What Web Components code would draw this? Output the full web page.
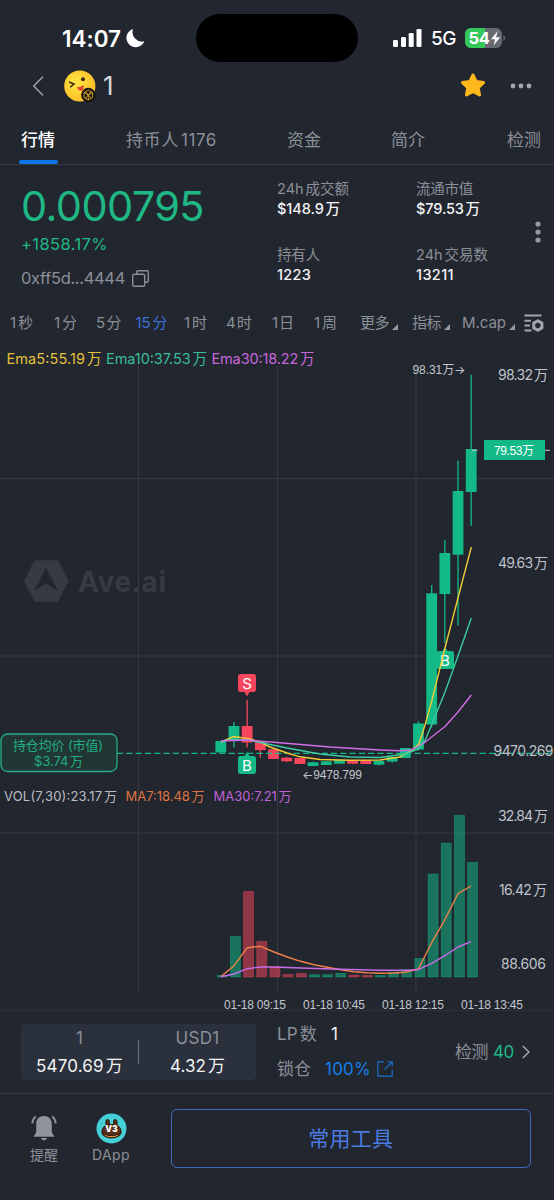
<!DOCTYPE html>
<html lang="zh-CN">
<head>
<meta charset="utf-8">
<title>Ave.ai</title>
<style>
    body {
        margin: 0;
        background: #22262f;
        color: #8b8f98;
        font-family: Inter, "Noto Sans CJK SC", sans-serif;
        text-autospace: normal;
    }
</style>
</head>
<body>
<app-screen>
    <status-bar></status-bar>
    <token-header name="1"></token-header>
    <tab-bar></tab-bar>
    <price-summary></price-summary>
    <interval-bar></interval-bar>
    <kline-chart></kline-chart>
    <pool-info></pool-info>
    <action-bar></action-bar>
</app-screen>

<script>
// Base: every element paints its template once in an open shadow root
class BaseElement extends HTMLElement {
    constructor() {
        super();
        this.attachShadow({mode: 'open'});
        this._sDOM = this.shadowRoot;
    }
    connectedCallback() {
        const tpl = document.createElement('template');
        tpl.innerHTML = `<style>:host{display:block;box-sizing:border-box} *{box-sizing:border-box}</style>` + this.render();
        this._sDOM.replaceChildren(tpl.content.cloneNode(true));
    }
}

class AppScreen extends BaseElement {
    render() {
        return `
        <style>
            :host {
                display: grid;
                width: 554px;
                height: 1200px;
                overflow: hidden;
                grid-template-rows: 64px 43px 58px 135px 45px 665px 84px 106px;
            }
        </style>
        <slot></slot>`;
    }
}

class StatusBar extends BaseElement {
    render() {
        return `
        <style>
            :host { display: grid; grid-template-columns: 196px 162px 1fr; padding-top: 14px; color: #fff; }
            .time { display: flex; align-items: center; height: 48px; padding-left: 62px; gap: 5px; font-size: 22.500px; font-weight: 600; }
            .island { height: 48px; border-radius: 24px; background: #000; }
            .right { display: flex; align-items: center; height: 48px; padding-left: 35px; font-size: 19px; font-weight: 500; }
            .right svg { display: block; }
            .net { margin: 1px 9px 0 9px; }
        </style>
        <div class="time"><fit-text w="59">14:07</fit-text>
            <svg width="19" height="20" viewBox="0 0 19 20"><path d="M7 1A9.3 9.3 0 1 0 18.4 13.3 9.6 9.6 0 0 1 7 1Z" fill="#fff"/></svg>
        </div>
        <div class="island"></div>
        <div class="right">
            <svg width="29" height="19" viewBox="0 0 29 19" fill="#fff"><rect y="11" width="5" height="7" rx="1.3"/><rect x="8" y="8" width="5" height="10" rx="1.3"/><rect x="15.7" y="4" width="5" height="14" rx="1.3"/><rect x="23.5" y="0" width="5" height="18" rx="1.3"/></svg>
            <fit-text class="net" w="25">5G</fit-text>
            <svg width="41" height="20" viewBox="0 0 41 20">
                <defs><clipPath id="b"><rect width="37" height="20" rx="6"/></clipPath></defs>
                <g clip-path="url(#b)"><rect width="37" height="20" fill="#676a72"/><rect width="20" height="20" fill="#34c759"/></g>
                <path d="M38.4 7v6c2.2-.8 2.2-5.2 0-6Z" fill="#676a72"/>
                <text x="3.5" y="16" textLength="21.5" font-size="16.5" font-weight="700" fill="#fff">54</text>
                <path d="M32.700 3 26 11.200h4.200L28.500 17.500l6.700-8.300H31Z" fill="#fff"/>
            </svg>
        </div>`;
    }
}

class TokenHeader extends BaseElement {
    render() {
        return `
        <style>
            :host { display: flex; align-items: center; padding: 0 22px 0 32px; color: #d4d6da; font-size: 26px; }
            .face { margin: 0 6px 0 19px; }
            .star { margin: 0 24px 0 auto; }
            svg { display: block; }
        </style>
        <svg width="13" height="20" viewBox="0 0 13 20" fill="none" stroke="#a0a3aa" stroke-width="1.500"><path d="M11 .8 1.700 10 11 19.200"/></svg>
        <svg class="face" width="33" height="32" viewBox="0 0 33 32">
            <defs><radialGradient id="f" cx=".4" cy=".4"><stop offset=".3" stop-color="#ffe03f"/><stop offset="1" stop-color="#fdc32b"/></radialGradient></defs>
            <circle cx="15.800" cy="16" r="15.600" fill="url(#f)"/>
            <circle cx="19" cy="9.300" r="2" fill="#3a2614"/>
            <path d="m5 12 5 2-3.800 3.300" fill="none" stroke="#3a2614" stroke-width="1.500"/>
            <path d="M12.800 17.200q3.200.5 6.700-2.100.8 5.300-2.300 5.600-3.300-.3-4.400-3.500Z" fill="#e8432c"/>
            <circle cx="24.300" cy="25" r="7.200" fill="#17140f"/>
            <path d="m24.300 20 4.300 2.500v5l-4.300 2.500-4.300-2.500v-5ZM20 22.500l4.300 2.500 4.300-2.500M24.300 25v5M21.500 21.800l5.600 6.400M27.100 21.800l-5.600 6.400" fill="none" stroke="#dba52c" stroke-width=".9"/>
        </svg>
        <span>${this.getAttribute('name')}</span>
        <svg class="star" width="26" height="25" viewBox="0 0 26 25"><path d="m13 2 3.200 6.600 7.300 1-5.300 5 1.300 7.300L13 18.500l-6.500 3.400 1.300-7.300-5.300-5 7.300-1Z" fill="#ffb81c" stroke="#ffb81c" stroke-width="3" stroke-linejoin="round"/></svg>
        <svg width="22" height="6" viewBox="0 0 22 6" fill="#a2a5ab"><circle cx="3" cy="3" r="2.400"/><circle cx="11" cy="3" r="2.400"/><circle cx="19" cy="3" r="2.400"/></svg>`;
    }
}

class TabBar extends BaseElement {
    render() {
        return `
        <style>
            :host { display: grid; grid-template-columns: 107px 161px 104px 116px 1fr; padding-left: 19px; border-bottom: 1px solid #343a45; font-size: 17px; }
            div { display: flex; flex-direction: column; height: 57px; padding-top: 22px; line-height: 22px; }
            .on { color: #fff; font-weight: 500; }
            .on fit-text { margin-left: 2px; }
            .on::after { content: ""; width: 39px; height: 4px; margin-top: 9px; border-radius: 3px; background: #0e75ea; }
        </style>
        <div class="on"><fit-text w="34">行情</fit-text></div>
        <div><fit-text w="91">持币人1176</fit-text></div>
        <div><fit-text w="34">资金</fit-text></div>
        <div><fit-text w="34">简介</fit-text></div>
        <div><fit-text w="34">检测</fit-text></div>`;
    }
}

class PriceSummary extends BaseElement {
    render() {
        const stat = (label, lw, value, vw) => `
            <div class="stat"><fit-text w="${lw}">${label}</fit-text><fit-text class="v" w="${vw}">${value}</fit-text></div>`;
        return `
        <style>
            :host { display: grid; grid-template-columns: 255px 1fr 10px; padding: 0 11px 0 22px; }
            .left { display: flex; flex-direction: column; padding-top: 16px; }
            .price { color: #1fb885; font-size: 41.500px; line-height: 50px; margin-left: -1px; }
            .chg { color: #1fb885; font-size: 16.500px; line-height: 20px; margin: 3px 0 0 -1px; }
            .addr { display: flex; align-items: center; gap: 7px; font-size: 16.500px; line-height: 20px; margin: 14px 0 0 -1px; }
            .stats { display: grid; grid-template-columns: 139px 1fr; grid-auto-rows: 66px; padding-top: 14px; font-size: 14.500px; line-height: 20px; }
            .stat { display: flex; flex-direction: column; }
            .v { color: #f2f3f5; font-weight: 450; }
            .more { margin-top: 56px; }
        </style>
        <div class="left">
            <fit-text class="price" w="183">0.000795</fit-text>
            <fit-text class="chg" w="87">+1858.17%</fit-text>
            <div class="addr"><fit-text w="104">0xff5d...4444</fit-text>
                <svg width="17" height="17" viewBox="0 0 17 17" fill="none" stroke="#8b8f98" stroke-width="1.400"><rect x=".7" y="4.200" width="12" height="12" rx="1.500"/><path d="M4.700 4V2.200q0-1.500 1.500-1.500h8.600q1.500 0 1.500 1.500v8.600q0 1.500-1.500 1.500H13"/></svg>
            </div>
        </div>
        <div class="stats">
            ${stat('24h成交额', 72, '$148.9万', 63)}
            ${stat('流通市值', 57, '$79.53万', 64)}
            ${stat('持有人', 43, '1223', 34)}
            ${stat('24h交易数', 72, '13211', 38)}
        </div>
        <svg class="more" width="10" height="22" viewBox="0 0 10 22" fill="#9699a0"><circle cx="5" cy="3" r="2.600"/><circle cx="5" cy="11" r="2.600"/><circle cx="5" cy="19" r="2.600"/></svg>`;
    }
}

class IntervalBar extends BaseElement {
    render() {
        const tri = `<svg width="6" height="6" viewBox="0 0 6 6"><path d="M6 0v6H0Z" fill="#9699a0"/></svg>`;
        return `
        <style>
            :host { display: grid; grid-template-columns: 44px 42px 39.500px 48.500px 42px 46px 42px 46px 52px 50px 62px 1fr; align-items: center; padding-left: 10px; font-size: 15px; line-height: 20px; }
            .on { color: #3b6fd8; }
            div { display: flex; align-items: flex-end; gap: 3px; }
            div svg { margin-bottom: 3px; }
        </style>
        <fit-text w="23">1秒</fit-text>
        <fit-text w="23">1分</fit-text>
        <fit-text w="25">5分</fit-text>
        <fit-text class="on" w="32">15分</fit-text>
        <fit-text w="23">1时</fit-text>
        <fit-text w="25">4时</fit-text>
        <fit-text w="21">1日</fit-text>
        <fit-text w="23">1周</fit-text>
        <div><fit-text w="29">更多</fit-text>${tri}</div>
        <div><fit-text w="29">指标</fit-text>${tri}</div>
        <div><fit-text w="44">M.cap</fit-text>${tri}</div>
        <svg width="20" height="18" viewBox="0 0 20 18" fill="none" stroke="#a2a5ab" stroke-width="1.900"><path d="M.5 1.500h17M.5 6.800h6.500M.5 11.500h5.500M.5 16.500h7"/><path d="m13.800 6.700 4.100 2.400v4.800l-4.100 2.400-4.100-2.400V9.100Z" stroke-width="3" stroke-linejoin="round"/></svg>`;
    }
}

// Price and volume panes; y values are pixels of the chart's own 554x1200 space
class KlineChart extends BaseElement {
    get candles() {
        // [up, open/close top, bottom, wick top, wick bottom, volume top]
        return [
            [1, 741, 752.5, 741, 752.5, 975], [1, 726, 741, 722, 747.5, 936], [0, 726, 742.5, 700, 747.5, 891],
            [0, 741, 750, 741, 757.7, 941], [0, 749.3, 759, 749, 759, 966.3], [0, 757.7, 761.3, 757, 762, 974],
            [0, 758, 764, 758, 764, 973], [1, 762.3, 766, 761.5, 766, 974.3], [1, 761.3, 765, 761, 765, 974.3],
            [1, 760, 763.7, 760, 764, 973], [0, 760.3, 763.7, 760, 764, 974.7], [0, 760.3, 764, 760, 764, 975],
            [1, 761, 764.7, 761, 765.5, 975], [1, 757, 761.5, 757, 762.5, 971.7], [1, 748, 758, 748, 758, 969.3],
            [1, 723.5, 749.5, 721.5, 750.5, 958], [1, 593.3, 724.5, 585, 727.5, 873.7], [1, 553, 594, 540, 643, 842.7],
            [1, 491, 554.7, 460.7, 625.7, 815], [1, 449, 492, 374.7, 525.7, 862]
        ];
    }

    render() {
        const text = (x, y, w, s, extra = '') => `<text x="${x}" y="${y}" textLength="${w}" lengthAdjust="spacing" ${extra}>${s}</text>`;
        const color = up => up ? '#13ba88' : '#f6465d';
        const bars = this.candles.map(([up, top, bottom, hi, lo, vol], i) => {
            const x = 220.8 + i * 13.18;
            const vx = 222.2 + i * 13.18;
            return `
                <path d="M${x} ${hi}V${lo}" stroke="${color(up)}" stroke-width="1.300"/>
                <rect x="${x - 5.4}" y="${top}" width="10.800" height="${bottom - top}" fill="${color(up)}"/>
                <rect x="${vx - 5}" y="${vol + .4}" width="10" height="${Math.max(977 - vol - .4, 1)}" fill="${color(up)}" fill-opacity=".52" stroke="${color(up)}" stroke-opacity=".4" stroke-width=".9"/>`;
        }).join('');
        return `
        <style>
            svg { display: block; overflow: visible; font-size: 14px; }
            .h { font-family: "Liberation Sans", "Noto Sans CJK SC", sans-serif; text-autospace: no-autospace; font-size: 12px; }
            .h tspan { font-family: Inter, sans-serif; }
        </style>
        <svg width="554" height="665" viewBox="0 345 554 665">
            <path d="M138.500 366V992M277.500 366V992M416 366V992M0 478.500H554M0 656H554M0 833H554" stroke="#353941" fill="none"/>
            <g fill="#363a44">
                <path d="m35.500 562 21.500 0 9.500 19-9.500 19H35.500L26 581Z" stroke="#363a44" stroke-width="3.500" stroke-linejoin="round"/>
                <path d="M46 567.500 58 591l-12-7.500L34 591Z" fill="#22262f"/>
                ${text(78, 592, 88, 'Ave.ai', 'font-size="28" font-weight="700"')}
            </g>
            ${bars}
            <g class="mark">
                <path d="M240.500 674h13q2.500 0 2.500 2.500v13q0 2.500-2.500 2.500h-4l-2.500 4.500-2.500-4.500h-4q-2.500 0-2.500-2.500v-13q0-2.500 2.500-2.500Z" fill="#f6465d"/>
                <path d="M240.500 756h4l2.500-4 2.500 4h4q2.500 0 2.500 2.500v13q0 2.500-2.500 2.500h-13q-2.500 0-2.500-2.500v-13q0-2.500 2.500-2.500Z" fill="#13ba88"/>
                <path d="M438.500 651h4l2.500-4 2.500 4h4q2.500 0 2.500 2.500v13q0 2.500-2.500 2.500h-13q-2.500 0-2.500-2.500v-13q0-2.500 2.500-2.500Z" fill="#13ba88"/>
            </g>
            <g fill="#fff" font-size="15" text-anchor="middle">
                <text x="247" y="688.500">S</text><text x="247" y="770.500">B</text><text x="445" y="665.500">B</text>
            </g>
            <path d="M117 753.300H554" stroke="#13ba88" stroke-width="1.300" stroke-dasharray="6.200 3.100"/>
            <g fill="none" stroke-width="1.400" stroke-linejoin="round">
                <path d="M221 742 234 736.500 250 739 260 742 270 747 287 753 300 756.800 320 759.500 350 760.300 380 760 400 757 412 750 419 744 425 725 432 700 445 648 458 598 471.300 547" stroke="#f0cb35"/>
                <path d="M221 741 234 739.500 247 740 258 742 287 748 320 754 350 757 380 757.500 405 754 418 749 425 740.500 432 724 445 692 458 656 471.300 618" stroke="#3ecba2"/>
                <path d="M221 741 247 740 277 742.500 330 747 380 750 400 750.800 411 750 424 743 445 726.500 458 712 471.300 695" stroke="#d26de6"/>
                <path d="M220.700 976.700 234 965.700 247.300 947.700 260.700 946.300 274 952 287.300 957 300.700 961.300 314 964.700 327.300 967.300 340.700 969.700 354 971.700 367 972.700 380.700 973.300 394 973 405 972.300 418.300 969 431.700 942.700 445 919.300 458 893.700 471 886" stroke="#ef8048"/>
                <path d="M220.700 976.700 234 974 247.300 968.700 260.700 967 274 967 300.700 968 340 969.300 380 970.300 406 970.300 418.300 969.700 431.700 963.300 445 955.700 458 947 471 941.700" stroke="#c86de6"/>
            </g>
            <path d="M472 450.300h5.500M545 450.300h5" stroke="#c8ccd4"/>
            <rect x="484" y="440" width="61" height="20" fill="#13ba88"/>
            <rect x="1" y="734" width="116" height="37.500" rx="6.500" fill="#213733" stroke="#24ad86" stroke-width="1.300"/>
            <g fill="#22ad83" font-size="13">
                ${text(13, 750.3, 90, '持仓均价 (市值)')}
                ${text(34, 765.7, 49, '$3.74万')}
            </g>
            <g font-size="14.500">
                ${text(6.5, 364.3, 95, 'Ema5:55.19万', 'fill="#e2c03a"')}
                ${text(106, 364.3, 101, 'Ema10:37.53万', 'fill="#38bd97"')}
                ${text(211.500, 364.3, 103, 'Ema30:18.22万', 'fill="#c766db"')}
            </g>
            <g font-size="13">
                ${text(4, 801.3, 113, 'VOL(7,30):23.17万', 'fill="#b9bcc4"')}
                ${text(125.500, 801.3, 79, 'MA7:18.48万', 'fill="#df7443"')}
                ${text(213.500, 801.3, 78, 'MA30:7.21万', 'fill="#bf63d6"')}
            </g>
            <g fill="#bfc2ca">
                ${text(498, 380, 50, '98.32万')}
                ${text(498, 568, 50, '49.63万')}
                ${text(493.500, 756, 60, '9470.269')}
                ${text(498, 820.5, 50, '32.84万')}
                ${text(499, 895, 48, '16.42万')}
                ${text(501, 969, 45, '88.606')}
            </g>
            <g class="h" fill="#c3c6cd">
                ${text(412.500, 374.300, 53, '98.31万<tspan>→</tspan>')}
                ${text(302, 779, 60, '<tspan>←</tspan>9478.799')}
                ${text(494, 454.5, 40, '79.53万', 'fill="#fff"')}
                ${text(224, 1009.300, 62, '01-18 09:15')}
                ${text(303, 1009.300, 62, '01-18 10:45')}
                ${text(382, 1009.300, 62, '01-18 12:15')}
                ${text(461, 1009.300, 62, '01-18 13:45')}
            </g>
        </svg>`;
    }
}

class PoolInfo extends BaseElement {
    render() {
        return `
        <style>
            :host { display: grid; grid-template-columns: 235px 1fr auto; column-gap: 21px; padding: 13px 24px 13px 21px; border-top: 1px solid #2b3039; border-bottom: 1px solid #343841; font-size: 17px; line-height: 20px; }
            .pool { display: grid; grid-template-columns: 117px 1px 117px; align-items: center; height: 56px; border-radius: 4px; background: #2a303c; }
            .pool hr { width: 1px; height: 24px; margin: 0; border: 0; background: #6e727b; }
            .pool div { display: flex; flex-direction: column; align-items: center; gap: 8px; }
            b { color: #f2f3f5; font-weight: 400; display: flex; }
            .lp { display: flex; flex-direction: column; gap: 15px; }
            .row { display: flex; align-items: center; height: 20px; }
            .row b, .row .pct { margin-left: 14px; }
            .pct { color: #1280e6; margin-right: 6px; }
            .check { display: flex; align-items: center; height: 56px; }
            .check .n { color: #1fb885; margin: 0 8px 0 5px; }
        </style>
        <div class="pool">
            <div><span>1</span><b><fit-text w="87">5470.69万</fit-text></b></div>
            <hr>
            <div><fit-text w="44">USD1</fit-text><b><fit-text w="55">4.32万</fit-text></b></div>
        </div>
        <div class="lp">
            <div class="row"><fit-text w="40">LP数</fit-text><b>1</b></div>
            <div class="row"><fit-text w="34">锁仓</fit-text><fit-text class="pct" w="46">100%</fit-text>
                <svg width="16" height="16" viewBox="0 0 16 16" fill="none" stroke="#1b6fca" stroke-width="1.200"><path d="M7 .8H.8v14.400h14.400V9M10.500.8h4.700v4.700M15.200.8 7.500 8.500"/></svg>
            </div>
        </div>
        <div class="check"><fit-text w="33">检测</fit-text><fit-text class="n" w="21">40</fit-text>
            <svg width="8" height="14" viewBox="0 0 8 14" fill="none" stroke="#a9acb3" stroke-width="1.400"><path d="m.8 1 6.200 6-6.200 6"/></svg>
        </div>`;
    }
}

class ActionBar extends BaseElement {
    render() {
        return `
        <style>
            :host { display: grid; grid-template-columns: 45px 45px 1fr; column-gap: 22px; padding: 15px 23.500px 0 21.500px; font-size: 14px; line-height: 18px; }
            .item { display: flex; flex-direction: column; align-items: center; padding-top: 4px; gap: 2px; }
            button { height: 59px; margin: 0 0 0 15.500px; padding: 0; border: 1.500px solid #4069b8; border-radius: 6px; background: none; color: #4a7be0; font: inherit; font-size: 21px; }
            svg { display: block; }
        </style>
        <div class="item">
            <svg width="26" height="31" viewBox="0 0 26 31" fill="#8f959b"><path d="M13 3c-5 0-7.800 3.300-7.800 8v8.500L2.500 23.700h21L20.800 19.500V11c0-4.700-2.800-8-7.800-8ZM10 25h6q-.7 2.400-3 2.400t-3-2.400Z"/><path d="M4.800 3.300Q1.500 6.100 1.300 10.500M21.200 3.300q3.300 2.800 3.500 7.200" fill="none" stroke="#8f959b" stroke-width="1.800"/></svg>
            <fit-text w="28">提醒</fit-text>
        </div>
        <div class="item">
            <svg width="31" height="31" viewBox="0 0 31 31">
                <circle cx="15.500" cy="15.500" r="15" fill="#45cfd6"/>
                <path d="M6 18.500c0 8.500 19 8.500 19 0Z" fill="#d69245" stroke="#31190f" stroke-width="1.200"/>
                <path d="M10 12V8q0-1.500 1.500-1.500T13.300 8v3.500h4.400V8q0-1.500 1.500-1.500T21 8v4q4 2.500 4 6c0 6-19 6-19 0q0-3.500 4-6Z" fill="#582f1b" stroke="#31190f"/>
                <text x="15.500" y="18.500" text-anchor="middle" font-size="8.500" font-weight="900" fill="#fff">V3</text>
            </svg>
            <fit-text w="38">DApp</fit-text>
        </div>
        <button><fit-text w="85">常用工具</fit-text></button>`;
    }
}

// Spreads its letters so that the text is exactly w pixels wide
class FitText extends HTMLElement {
    constructor() {
        super();
        this.attachShadow({mode: 'open'});
        this.shadowRoot.innerHTML = `
        <style>
            :host { display: inline-block; white-space: nowrap; }
            span { display: inline-block; }
        </style>
        <span><slot></slot></span>`;
    }
    connectedCallback() {
        const w = Number(this.getAttribute('w'));
        const n = this.textContent.length;
        const natural = this.shadowRoot.querySelector('span').getBoundingClientRect().width;
        this.style.letterSpacing = `${((w - natural) / n).toFixed(3)}px`;
        this.style.width = `${w}px`;
    }
}

customElements.define('app-screen', AppScreen);
customElements.define('status-bar', StatusBar);
customElements.define('token-header', TokenHeader);
customElements.define('tab-bar', TabBar);
customElements.define('price-summary', PriceSummary);
customElements.define('interval-bar', IntervalBar);
customElements.define('kline-chart', KlineChart);
customElements.define('pool-info', PoolInfo);
customElements.define('action-bar', ActionBar);
customElements.define('fit-text', FitText);
</script>
</body>
</html>
